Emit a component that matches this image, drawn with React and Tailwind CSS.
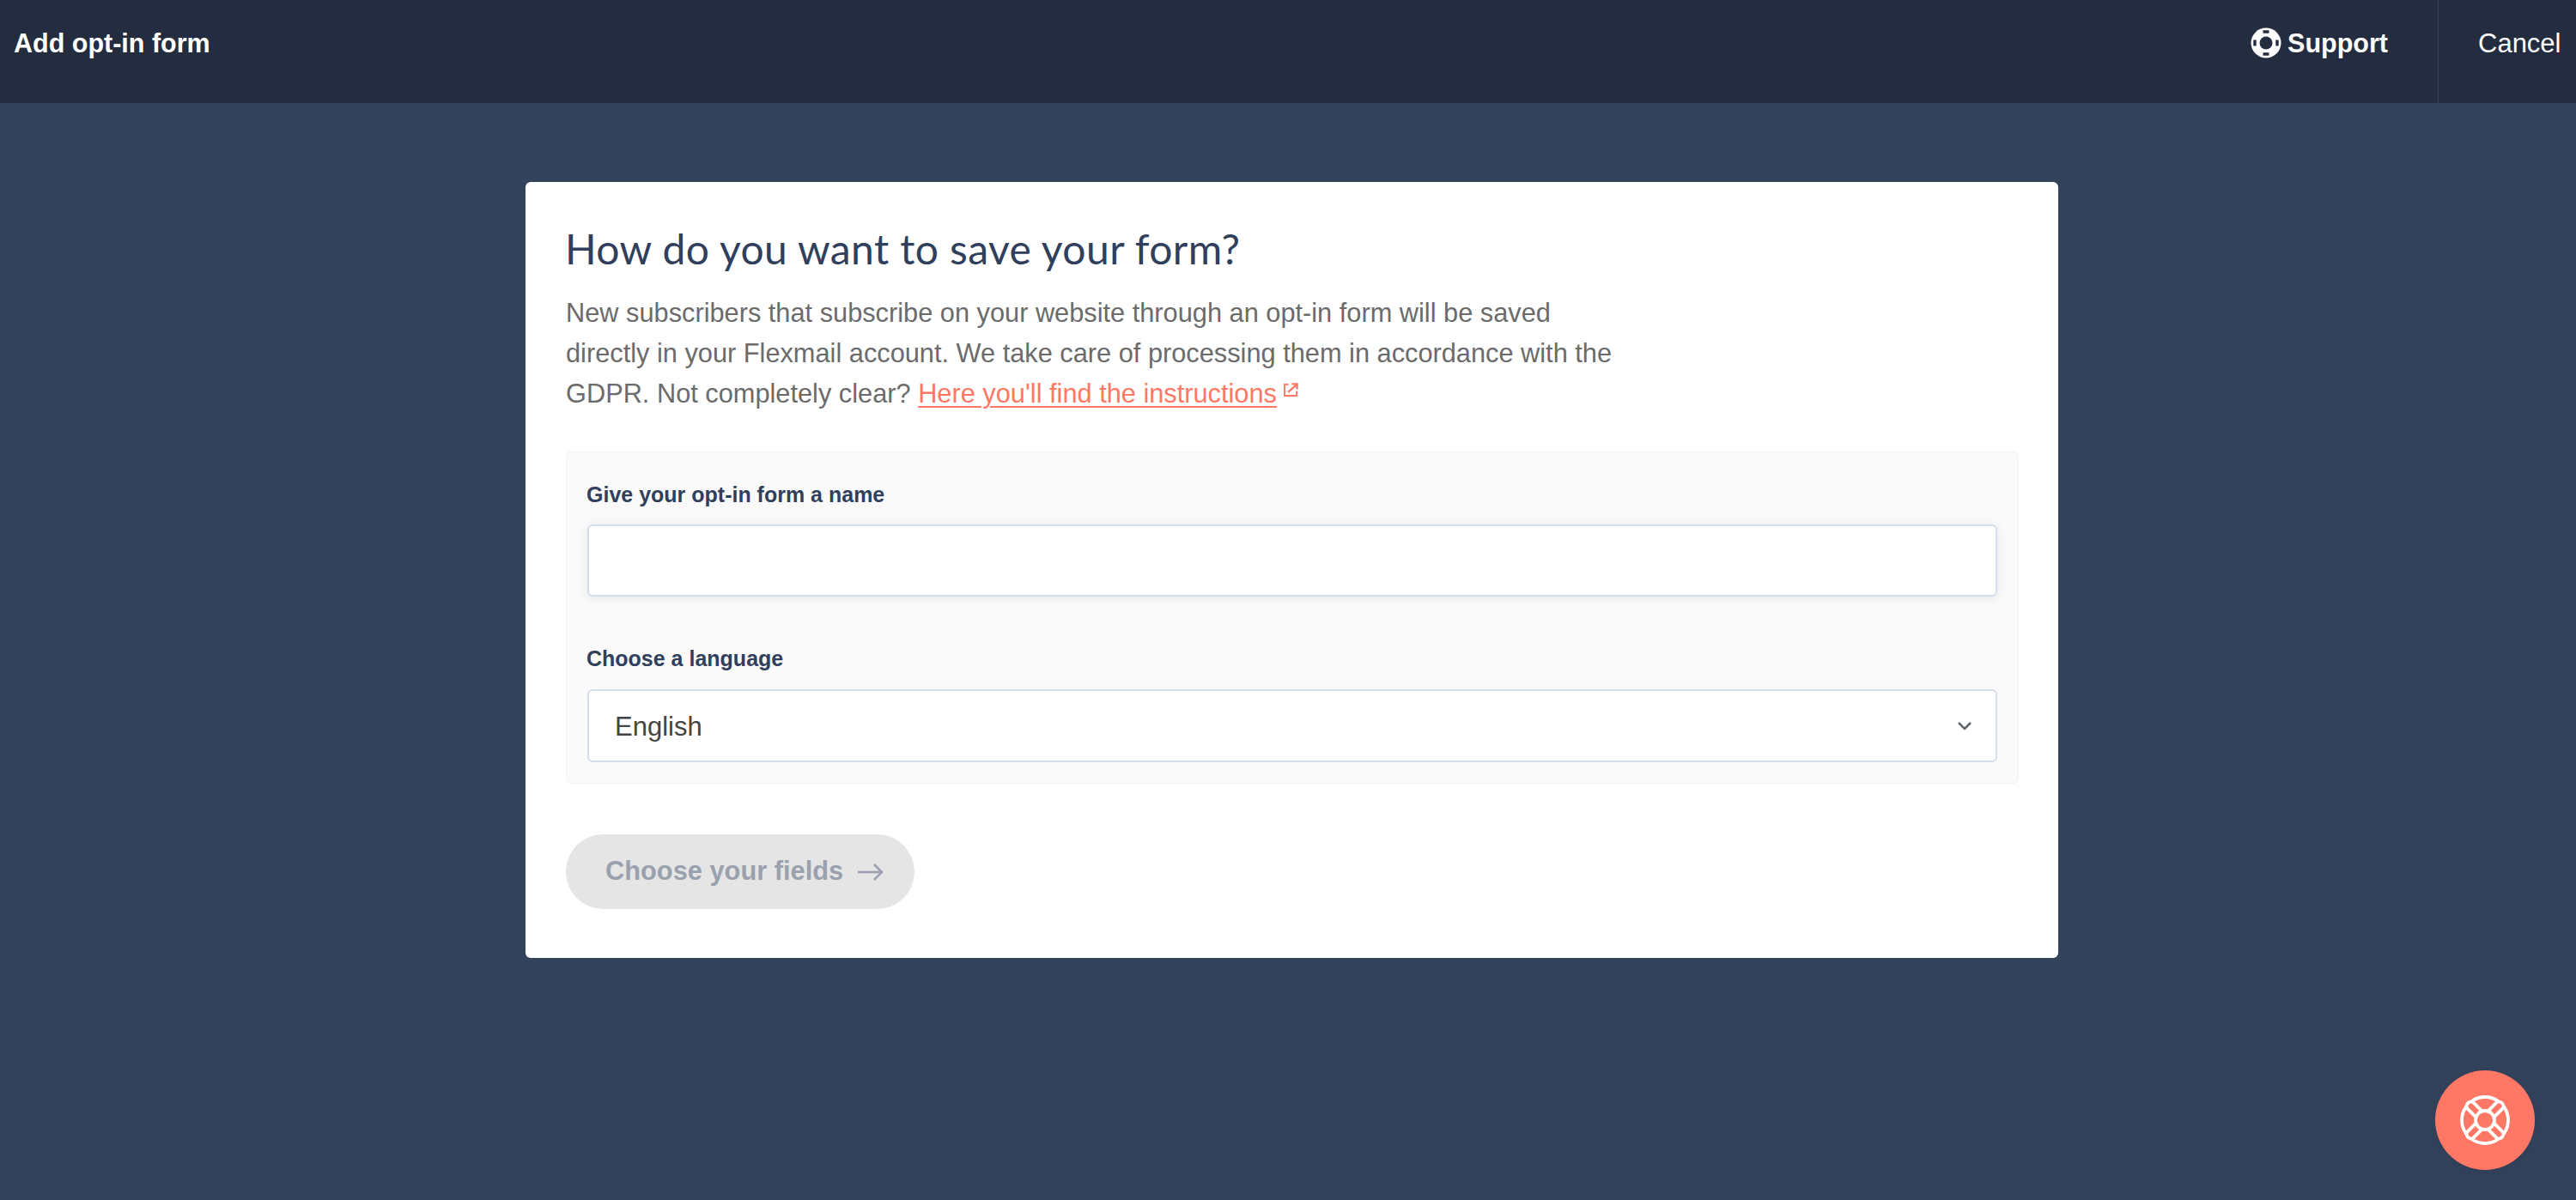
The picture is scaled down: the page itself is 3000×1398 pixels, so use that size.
import React from "react";

const Ring = () => (
  <svg width="36" height="36" viewBox="0 0 36 36" className="shrink-0">
    <circle cx="18" cy="18" r="17.500" fill="#fff" />
    <circle cx="18" cy="18" r="7.500" fill="#242d40" />
    <path d="M14.500 5h7M14.500 31h7M5 14.500v7M31 14.500v7" stroke="#242d40" strokeWidth="3.400" fill="none" />
  </svg>
);

const Band = ({ angle }) => (
  <path d="M25 20V6.500a5 4.500 0 0 1 10 0V20" transform={`rotate(${angle} 30 30)`} />
);

const Arc = ({ angle }) => (
  <path d="M14.800 7.700A27 27 0 0 1 45.200 7.700" transform={`rotate(${angle} 30 30)`} />
);

const Buoy = () => (
  <svg width="60" height="60" viewBox="0 0 60 60" fill="none" stroke="#fff" strokeWidth="3.800" strokeLinecap="round">
    <circle cx="30" cy="30" r="11" />
    <Band angle={45} />
    <Band angle={135} />
    <Band angle={225} />
    <Band angle={315} />
    <Arc angle={0} />
    <Arc angle={90} />
    <Arc angle={180} />
    <Arc angle={270} />
  </svg>
);

export default function App() {
  return (
    <div className="min-h-[1398px] bg-[#34435c] font-['Liberation_Sans',Arial,sans-serif] relative">
      <header className="h-[120px] bg-[#242d40] flex items-stretch text-white">
        <div className="flex-1 pl-4 flex items-center pb-[20px] text-[30.5px] font-bold leading-none">Add opt-in form</div>
        <div className="flex items-center gap-[7px] pr-[58px] pb-[20px] text-[30.5px] font-bold leading-none">
          <Ring />
          <span>Support</span>
        </div>
        <div className="w-[161px] border-l border-[#34435c] pl-[46px] flex items-center pb-[20px] text-[31px] leading-none">Cancel</div>
      </header>

      <main className="pt-[92px] pl-[612px]">
        <div className="w-[1785px] h-[904px] bg-white rounded-[6px] pt-[48px] px-[47px]">
          <h1 className="-ml-[1px] font-['Lato',sans-serif] font-normal text-[48px] leading-[60px] text-[#2f3f5c] tracking-[0.42px]">How do you want to save your form?</h1>
          <p className="mt-[21px] w-[1240px] text-[30.75px] leading-[47px] text-[#6b6b6b]">
            New subscribers that subscribe on your website through an opt-in form will be saved directly in your Flexmail account. We take care of processing them in accordance with the GDPR. Not completely clear?{" "}
            <a className="text-[#ff7866] underline decoration-2 underline-offset-[4px]" href="#">Here you'll find the instructions</a>
            <svg width="17" height="16" viewBox="0 0 18 17" fill="none" stroke="#ff7866" strokeWidth="2" className="inline-block ml-[8px] align-[7px]">
              <path d="M6 2H1v14h15v-6" />
              <path d="M5.500 11.500L15.500 2.500M10 1.500h6.500V8" strokeWidth="2.500" />
            </svg>
          </p>

          <section className="mt-[44px] w-[1692px] h-[387px] bg-[#fafafa] border border-[#f2f3f4] rounded-[6px] px-[24px] pt-[31px]">
            <label className="-ml-[1px] block text-[25px] leading-[36px] font-bold text-[#2f3f5c]">Give your opt-in form a name</label>
            <div className="mt-[17px] h-[84px] bg-white border-2 border-[#d6deea] rounded-[6px] shadow-[0_2px_12px_rgba(40,55,85,0.1)]" />
            <label className="-ml-[1px] mt-[54px] block text-[25px] leading-[36px] font-bold text-[#2f3f5c]">Choose a language</label>
            <div className="mt-[18px] h-[85px] bg-white border-2 border-[#d6deea] rounded-[6px] flex items-center justify-between pl-[30px] pr-[28px]">
              <span className="text-[31px] text-[#444444] leading-none pt-[2px]">English</span>
              <svg width="16" height="11" viewBox="0 0 16 11" fill="none" stroke="#5f656d" strokeWidth="2.600">
                <path d="M1 2l7 7 7-7" />
              </svg>
            </div>
          </section>

          <button className="mt-[59px] w-[406px] h-[87px] rounded-full bg-[#e5e5e5] flex items-center gap-[17px] pl-[46px] text-[30.8px] font-bold text-[#9aa1ae]">
            <span>Choose your fields</span>
            <svg width="30" height="22" viewBox="0 0 30 22" fill="none" stroke="#9aa1ae" strokeWidth="2.500">
              <path d="M0 11h28M19 2l9 9-9 9" />
            </svg>
          </button>
        </div>
      </main>

      <div className="absolute left-[2836px] top-[1247px] w-[116px] h-[116px] rounded-full bg-[#ff7866] flex items-center justify-center shadow-[0_2px_16px_rgba(30,40,60,0.2)]">
        <Buoy />
      </div>
    </div>
  );
}
